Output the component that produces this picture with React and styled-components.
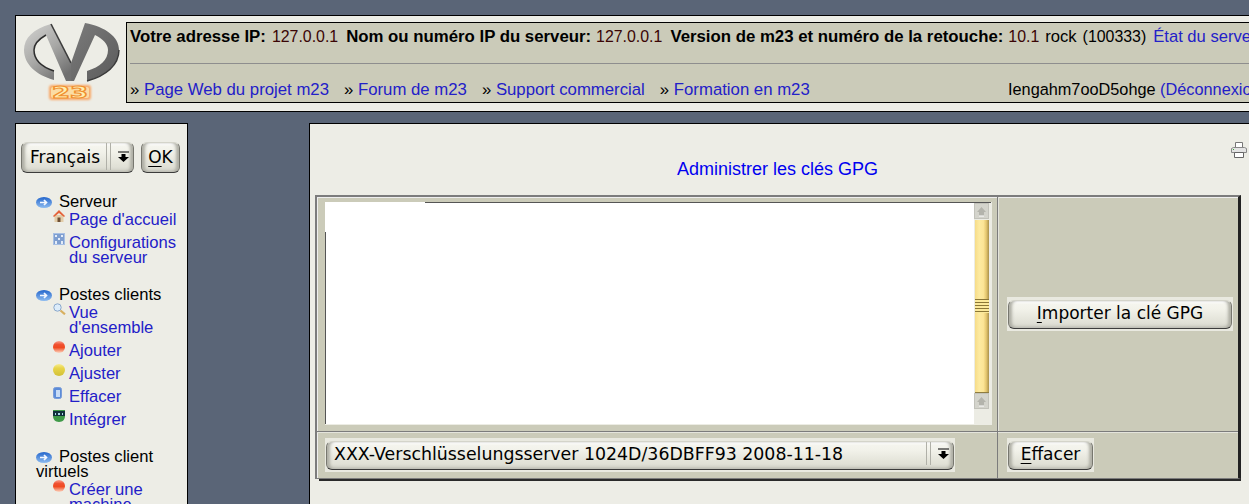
import React from "react";
import styled, { createGlobalStyle } from "styled-components";

const GlobalStyle = createGlobalStyle`
  html, body {
    margin: 0;
    height: 504px;
    overflow: hidden;
    background: #5a6577;
  }
  body {
    font-family: "Liberation Sans", Arial, sans-serif;
    font-size: 16.6px;
    line-height: 15px;
    color: #000;
  }
`;

const Page = styled.div`
  width: 1600px;
  height: 504px;
  padding: 15px 0 0 15px;
  box-sizing: border-box;
  overflow: hidden;
`;

const Header = styled.header`
  display: flex;
  width: 1500px;
  height: 97px;
  box-sizing: border-box;
  border: 1px solid #000;
  background: #edede6;
`;

const LogoCell = styled.div`
  width: 110px;
  flex: none;
`;

const InfoPanel = styled.div`
  margin-top: 6px;
  height: 81px;
  flex: 1;
  box-sizing: border-box;
  border: 1px solid #000;
  background: #cbcbb9;
  padding-left: 3px;
  white-space: nowrap;
`;

const InfoLine = styled.div`
  display: flex;
  height: 27px;
  box-sizing: border-box;
  align-items: center;
  line-height: 19px;
`;

const Rule = styled.hr`
  margin: 13px 3px 0 0;
  border: 0;
  height: 1px;
  background: #8e8e8e;
`;

const LinksLine = styled(InfoLine)`
  margin-top: 12px;
`;

const LinkGroup = styled.div`
  width: 878px;
  flex: none;
  display: flex;
  gap: 15px;
  font-size: 16.75px;
`;

const Strong = styled.b`
  font-size: 16.8px;
  margin-right: ${props => props.$gap || 5}px;
`;

const Value = styled.span`
  color: ${props => (props.$plain ? "#000" : "#3a0505")};
  font-size: ${props => (props.$num ? "15.9px" : "inherit")};
  margin-right: ${props => props.$gap || 5}px;
`;

const User = styled.span`
  font-size: 16.3px;
`;

const Link = styled.a`
  color: #2320c8;
  text-decoration: none;
`;

const Columns = styled.div`
  display: flex;
  gap: 121px;
  margin-top: 11px;
`;

const Sidebar = styled.aside`
  width: 173px;
  height: 500px;
  flex: none;
  box-sizing: border-box;
  border: 1px solid #000;
  background: #edede6;
`;

const LangRow = styled.div`
  display: flex;
  gap: 7px;
  padding: 18px 0 0 5px;
`;

const Nav = styled.nav`
  padding: 21px 6px 0 20px;
`;

const Group = styled.section`
  margin-bottom: 22px;
`;

const GroupTitle = styled.div`
  margin-bottom: 3px;
  & > svg {
    margin-right: 7px;
    vertical-align: -1px;
  }
`;

const SubList = styled.div`
  display: flex;
  flex-direction: column;
  gap: 8px;
  padding-left: 17px;
`;

const SubItem = styled.div`
  display: grid;
  grid-template-columns: 16px 1fr;
  & > svg {
    margin-top: -2px;
  }
`;

const Main = styled.main`
  width: 1100px;
  height: 500px;
  box-sizing: border-box;
  border: 1px solid #000;
  background: #edede6;
  padding-left: 5px;
`;

const PrintRow = styled.div`
  width: 932px;
  height: 18px;
  padding-top: 18px;
  display: flex;
  justify-content: flex-end;
`;

const Title = styled.h1`
  width: 925px;
  margin: 0;
  height: 35px;
  font-size: 18px;
  font-weight: normal;
  line-height: 19px;
  text-align: center;
  color: #0000f0;
`;

const Table = styled.div`
  position: relative;
  width: 926px;
  height: 284px;
  box-sizing: border-box;
  display: grid;
  grid-template-columns: 681px 1fr;
  grid-template-rows: 235px 1fr;
  background: #cbcbb9;
  border-top: 2px solid #7c7c7c;
  border-left: 2px solid #7c7c7c;
  border-right: 3px solid #222;
  border-bottom: 1px solid #7c7c7c;
  box-shadow: inset 0 1px 0 #eee, inset 1px 0 0 #eee;
  &::after {
    content: "";
    position: absolute;
    left: 2px;
    right: -3px;
    bottom: -3px;
    height: 2px;
    background: #2a2a2a;
  }
`;

const Cell = styled.div`
  display: flex;
  align-items: ${props => props.$align || "center"};
  padding-left: ${props => props.$pad}px;
  padding-top: ${props => props.$top || 0}px;
  box-sizing: border-box;
  border-right: ${props => (props.$right ? "1px solid #7c7c7c" : "0")};
  border-bottom: ${props => (props.$bottom ? "1px solid #7c7c7c" : "0")};
  box-shadow: ${props => (props.$bottom ? "0 1px 0 #e4e4dc" : "none")}, ${props => (props.$right ? "1px 0 0 #e4e4dc" : "0 0 0 transparent")};
`;

const TextArea = styled.div`
  position: relative;
  width: 667px;
  height: 223px;
  display: flex;
  justify-content: flex-end;
  background: #fff;
  border-right: 1px solid #ecece4;
  border-bottom: 1px solid #ecece4;
  box-sizing: border-box;
  &::before {
    content: "";
    position: absolute;
    left: 100px;
    right: 0;
    top: 0;
    height: 1px;
    background: #555;
  }
  &::after {
    content: "";
    position: absolute;
    left: 0;
    top: 30px;
    bottom: 0;
    width: 1px;
    background: #555;
  }
`;

const ScrollTrack = styled.div`
  width: 17px;
  box-sizing: border-box;
  background: #ecece4;
  display: flex;
  flex-direction: column;
  align-items: flex-start;
  padding-top: 1px;
`;

const ScrollBtn = styled.div`
  width: 15px;
  height: 16px;
  box-sizing: border-box;
  display: flex;
  align-items: center;
  justify-content: center;
  background: #d4d4cc;
  border: 1px solid #c2c2ba;
`;

const Thumb = styled.div`
  position: relative;
  width: 14px;
  height: 173px;
  margin: 1px 0 0 1px;
  box-sizing: border-box;
  border-bottom: 1px solid #8e7c40;
  background: linear-gradient(to right, #f6dc88 0, #fdeaa0 30%, #fce596 60%, #e6c870 80%, #a8904c 100%);
  &::after {
    content: "";
    position: absolute;
    left: 0;
    right: 0;
    top: 79px;
    height: 14px;
    background: repeating-linear-gradient(to bottom, #8a7636 0, #8a7636 1px, #fbe99a 1px, #fbe99a 3px);
  }
`;

const Halo = styled.div`
  padding: 3px 1px 2px;
  background: #e9e9e0;
  flex: none;
`;

const Chrome = styled.div`
  height: ${props => props.$h || 29}px;
  width: ${props => props.$w}px;
  box-sizing: border-box;
  display: flex;
  align-items: center;
  justify-content: ${props => (props.$left ? "flex-start" : "center")};
  padding-left: ${props => props.$pad || 0}px;
  padding-bottom: ${props => props.$up || 2}px;
  font-family: "DejaVu Sans", Verdana, sans-serif;
  font-size: ${props => props.$fs || 17}px;
  line-height: 20px;
  white-space: nowrap;
  color: #000;
  border: 1px solid #77776f;
  border-top-color: #d4d4ca;
  border-bottom-color: #3c3c3c;
  border-radius: 6px;
  background: linear-gradient(to bottom, #f6f6f0 0, #f2f2ea 30%, #e4e4da 70%, #dadad0 100%);
  box-shadow: inset 4px 0 3px -1px #b0b0a6, inset -4px 0 3px -1px #b0b0a6, inset 0 3px 2px -1px #fff, inset 0 -3px 3px -1px #c6c6bc;
`;

const Accel = styled.span`
  text-decoration: underline;
  text-underline-offset: 3px;
`;

const Grow = styled.span`
  flex: 1;
`;

const Grip = styled.span`
  align-self: stretch;
  width: 3px;
  margin: 0 7px 0 0;
  border-left: 1px solid #b0b0a8;
  border-right: 1px solid #b0b0a8;
`;

const ArrowSlot = styled.span`
  width: 15px;
  display: flex;
  flex: none;
`;

const Arrow = () => (
  <svg width="11" height="12" viewBox="0 0 11 12">
    <path d="M0 1h11" stroke="#000" strokeWidth="1" />
    <path d="M3.500 3h4v3H11L5.500 11 0 6h3.500z" fill="#000" />
  </svg>
);

const Logo = () => (
  <svg width="110" height="95" viewBox="16 16 110 95">
    <defs>
      <linearGradient id="lg" x1="0" y1="0" x2="0.7" y2="1">
        <stop offset="0" stopColor="#d4d4d2" />
        <stop offset="0.55" stopColor="#a8a8a6" />
        <stop offset="1" stopColor="#707070" />
      </linearGradient>
      <linearGradient id="rg" x1="0" y1="0" x2="1" y2="1">
        <stop offset="0" stopColor="#7c7c7c" />
        <stop offset="1" stopColor="#5a5a5a" />
      </linearGradient>
      <filter id="glow" x="-20%" y="-30%" width="140%" height="160%">
        <feGaussianBlur stdDeviation="1.300" />
      </filter>
    </defs>
    <path d="M51 24C33 29 24 38 24 50c0 14 12 25 30 30v-9C42 67 34 60 34 50c0-6 5-11 12-15l20 46h7L71 63z" fill="url(#lg)" />
    <path d="M46 35c-7 4-12 9-12 15 0 10 8 17 20 21" fill="none" stroke="#2e2e2e" strokeWidth="1.500" />
    <path d="M51 24l20 39" stroke="#3c3c3c" strokeWidth="1.600" />
    <path d="M85 23c21 4 34 14 34 27 0 15-13 26-32 31V71c13-4 21-11 21-21 0-6-5-11-13-15L74 81h-3V63z" fill="url(#rg)" />
    <path d="M119 50c0 15-13 26-32 31" fill="none" stroke="#3a3a3a" strokeWidth="1.400" />
    <rect x="49" y="85" width="42" height="15" rx="3" fill="#f8a868" filter="url(#glow)" />
    <rect x="51" y="87" width="38" height="11" rx="2" fill="#fbdca4" />
    <text x="70" y="98" textAnchor="middle" fontFamily="DejaVu Sans" fontWeight="bold" fontSize="15" textLength="36" lengthAdjust="spacingAndGlyphs" fill="#ffeeb0" stroke="#f09030" strokeWidth="1">23</text>
  </svg>
);

const Bullet = () => (
  <svg width="16" height="11" viewBox="0 0 16 11">
    <defs>
      <linearGradient id="bl" x1="0" y1="0" x2="0" y2="1">
        <stop offset="0" stopColor="#2466cc" />
        <stop offset="1" stopColor="#8ebcf0" />
      </linearGradient>
    </defs>
    <ellipse cx="8" cy="5.500" rx="8" ry="5.500" fill="url(#bl)" />
    <path d="M4 5.500h6M8 3l2.500 2.500L8 8" fill="none" stroke="#f4f8ff" strokeWidth="1.700" />
  </svg>
);

const Ball = ({ id, stops }) => (
  <svg width="12" height="12" viewBox="0 0 12 12">
    <defs>
      <linearGradient id={id} x1="0" y1="0" x2="0" y2="1">
        {stops.map(([at, color]) => (
          <stop key={at} offset={at} stopColor={color} />
        ))}
      </linearGradient>
    </defs>
    <circle cx="6" cy="6" r="6" fill={`url(#${id})`} />
  </svg>
);

const icons = {
  home: (
    <svg width="12" height="12" viewBox="0 0 12 12">
      <path d="M1.500 5h9v7h-9z" fill="#e2cca8" />
      <path d="M6 0l6 6-1 1-5-4-5 4-1-1z" fill="#e4623a" />
      <path d="M4.500 7.500h3V12h-3z" fill="#6e5034" />
    </svg>
  ),
  config: (
    <svg width="12" height="12" viewBox="0 0 12 12">
      <rect width="12" height="12" fill="#a8c0e4" />
      <rect x="1" y="1" width="10" height="10" fill="#7f9fd0" />
      <path d="M2 2h2v2H2zM8 2h2v2H8zM5 5h2v2H5zM2 8h2v3H2zM8 8h2v3H8z" fill="#e4ecf8" />
    </svg>
  ),
  search: (
    <svg width="13" height="12" viewBox="0 0 13 12">
      <circle cx="4.500" cy="4.500" r="3.700" fill="#dcecfa" stroke="#8aa8cc" />
      <path d="M7.500 7.500L12 11.300" stroke="#d8b060" strokeWidth="2.200" />
    </svg>
  ),
  add: <Ball id="red" stops={[[0, "#f8a090"], [0.3, "#f05030"], [0.55, "#f04a20"], [1, "#fcd8c4"]]} />,
  adjust: <Ball id="yel" stops={[[0, "#f6ec90"], [0.35, "#e8d448"], [1, "#d2c038"]]} />,
  remove: (
    <svg width="9" height="12" viewBox="0 0 9 12">
      <rect x="0.500" y="0.500" width="8" height="11" rx="2" fill="#5c8cd8" stroke="#7a9cd8" />
      <rect x="3" y="3" width="4" height="7" fill="#c8dcf6" />
    </svg>
  ),
  integrate: (
    <svg width="12" height="12" viewBox="0 0 12 12">
      <path d="M0 0h12v6c0 3-2 6-6 6S0 9 0 6z" fill="#3f9a48" />
      <rect x="0" y="1" width="12" height="5" fill="#10303c" />
      <path d="M2 3h1v2H2zM5 3h2v2H5zM9 3h1v2H9z" fill="#a8d8e8" />
    </svg>
  ),
};

const menu = [
  {
    title: "Serveur",
    items: [
      { icon: "home", label: "Page d'accueil" },
      { icon: "config", label: "Configurations du serveur" },
    ],
  },
  {
    title: "Postes clients",
    items: [
      { icon: "search", label: "Vue d'ensemble" },
      { icon: "add", label: "Ajouter" },
      { icon: "adjust", label: "Ajuster" },
      { icon: "remove", label: "Effacer" },
      { icon: "integrate", label: "Intégrer" },
    ],
  },
  {
    title: "Postes client virtuels",
    items: [{ icon: "add", label: "Créer une machine" }],
  },
];

const ScrollArrow = () => (
  <svg width="11" height="11" viewBox="0 0 11 11">
    <path d="M5.500 1L10 6H8v4H3V6H1z" fill="#b4b4ac" />
    <path d="M3 10h5" stroke="#fff" />
  </svg>
);

const Printer = () => (
  <svg width="16" height="16" viewBox="0 0 16 16">
    <path d="M4.500 0.500h7v5h-7z" fill="#fff" stroke="#777" />
    <path d="M0.500 6.500l2-1h11l2 1v4h-15z" fill="#e4e4e4" stroke="#888" />
    <path d="M3.500 10.500h9v5h-9z" fill="#fff" stroke="#666" />
    <path d="M2 7.500h1" stroke="#3a3" />
  </svg>
);

const App = () => (
  <Page>
    <GlobalStyle />
    <Header>
      <LogoCell>
        <Logo />
      </LogoCell>
      <InfoPanel>
        <InfoLine>
          <Strong $gap={6}>Votre adresse IP:</Strong>
          <Value $num $gap={8}>127.0.0.1</Value>
          <Strong>Nom ou numéro IP du serveur:</Strong>
          <Value $num $gap={8}>127.0.0.1</Value>
          <Strong>Version de m23 et numéro de la retouche:</Strong>
          <Value $num $gap={6}>10.1</Value>
          <Value $plain $gap={6}>rock</Value>
          <Value $plain $num $gap={7}>(100333)</Value>
          <Link href="#">État du serveur</Link>
        </InfoLine>
        <Rule />
        <LinksLine>
          <LinkGroup>
            <span>» <Link href="#">Page Web du projet m23</Link></span>
            <span>» <Link href="#">Forum de m23</Link></span>
            <span>» <Link href="#">Support commercial</Link></span>
            <span>» <Link href="#">Formation en m23</Link></span>
          </LinkGroup>
          <User>Iengahm7ooD5ohge <Link href="#">(Déconnexion)</Link></User>
        </LinksLine>
      </InfoPanel>
    </Header>
    <Columns>
      <Sidebar>
        <LangRow>
          <Chrome $w={113} $h={31} $left $pad={8}>
            <Grow>Français</Grow>
            <Grip />
            <ArrowSlot><Arrow /></ArrowSlot>
          </Chrome>
          <Chrome $w={39} $h={31}><Accel>O</Accel>K</Chrome>
        </LangRow>
        <Nav>
          {menu.map(group => (
            <Group key={group.title}>
              <GroupTitle>
                <Bullet />
                {group.title}
              </GroupTitle>
              <SubList>
                {group.items.map(item => (
                  <SubItem key={item.label}>
                    {icons[item.icon]}
                    <Link href="#">{item.label}</Link>
                  </SubItem>
                ))}
              </SubList>
            </Group>
          ))}
        </Nav>
      </Sidebar>
      <Main>
        <PrintRow>
          <Printer />
        </PrintRow>
        <Title>Administrer les clés GPG</Title>
        <Table>
          <Cell $right $bottom $pad={8} $top={5} $align="flex-start">
            <TextArea>
              <ScrollTrack>
                <ScrollBtn><ScrollArrow /></ScrollBtn>
                <Thumb />
                <ScrollBtn><ScrollArrow /></ScrollBtn>
              </ScrollTrack>
            </TextArea>
          </Cell>
          <Cell $bottom $pad={9}>
            <Halo>
              <Chrome $w={224} $up={3}><Accel>I</Accel>mporter la clé GPG</Chrome>
            </Halo>
          </Cell>
          <Cell $right $pad={8}>
            <Halo>
              <Chrome $w={628} $left $pad={7} $up={4} $fs={17.37}>
                <Grow>XXX-Verschlüsselungsserver 1024D/36DBFF93 2008-11-18</Grow>
                <Grip />
                <ArrowSlot><Arrow /></ArrowSlot>
              </Chrome>
            </Halo>
          </Cell>
          <Cell $pad={9}>
            <Halo>
              <Chrome $w={85} $up={4}><Accel>E</Accel>ffacer</Chrome>
            </Halo>
          </Cell>
        </Table>
      </Main>
    </Columns>
  </Page>
);

export default App;
